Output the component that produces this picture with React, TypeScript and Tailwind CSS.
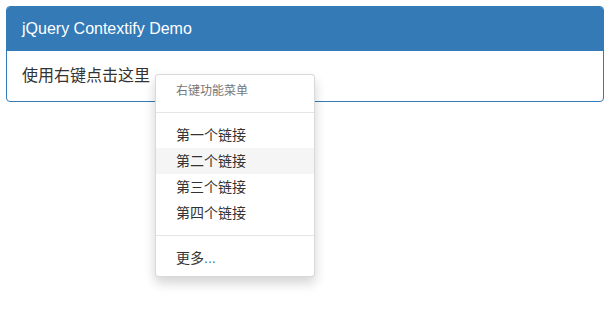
export default function App() {
  const items = ['第一个链接', '第二个链接', '第三个链接', '第四个链接'];

  return (
    <div
      className="relative min-h-[320px] bg-white p-[6px] text-[14px] leading-[20px] text-[#333]"
      style={{ fontFamily: '"Liberation Sans", Arial, "Noto Sans CJK SC", sans-serif' }}
    >
      {/* panel */}
      <div className="rounded-[4px] border border-[#337ab7] bg-white">
        <div className="rounded-t-[3px] bg-[#337ab7] px-[15px] py-[11px] text-[16px] leading-[22px] text-white">
          jQuery Contextify Demo
        </div>
        <div className="px-[15px] py-[14px] text-[16px] leading-[22px]">使用右键点击这里</div>
      </div>

      {/* context menu */}
      <div className="absolute left-[155px] top-[74px] w-[160px] rounded-[4px] border border-black/15 bg-white py-[5px] shadow-[0_6px_12px_rgba(0,0,0,0.175)]">
        <div className="px-[20px] py-[3px] text-[12px] leading-[17px] text-[#777]">右键功能菜单</div>
        <div className="my-[9px] h-px bg-[#e5e5e5]" />
        {items.map((item, i) => (
          <div
            key={item}
            className={`px-[20px] py-[3px] text-[#333] ${i === 1 ? 'bg-[#f5f5f5]' : ''}`}
          >
            {item}
          </div>
        ))}
        <div className="my-[9px] h-px bg-[#e5e5e5]" />
        <div className="px-[20px] py-[3px] text-[#333]">
          更多<span className="text-[#337ab7]">...</span>
        </div>
      </div>
    </div>
  );
}
